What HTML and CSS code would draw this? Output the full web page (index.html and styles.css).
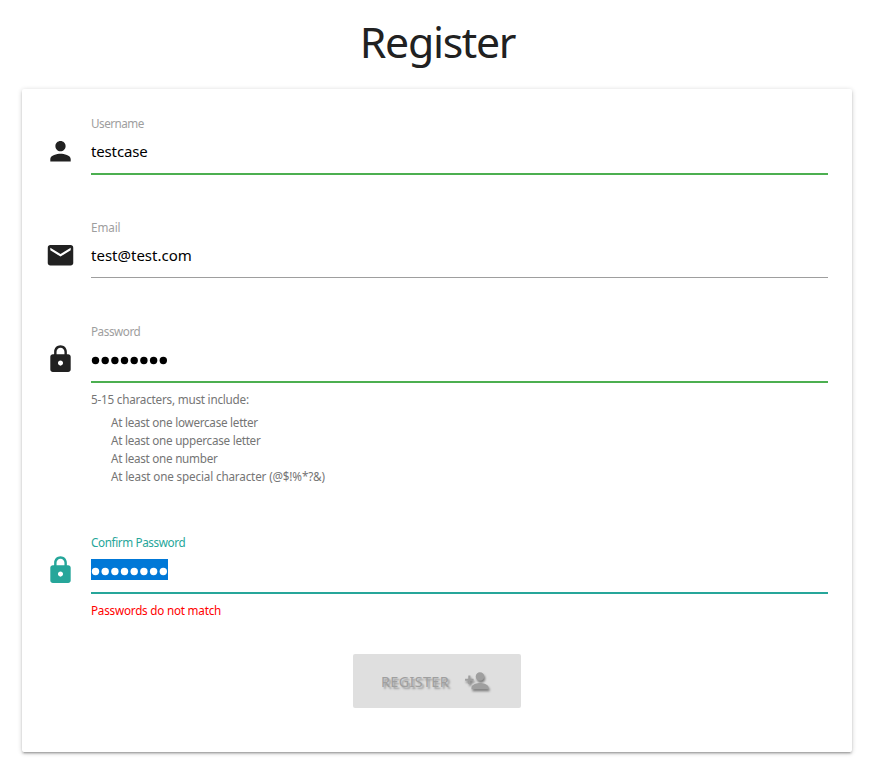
FILE: index.html
```html
<!DOCTYPE html>
<html lang="en">
<head>
<meta charset="utf-8">
<title>Register</title>
<link rel="stylesheet" href="styles.css">
</head>
<body>
<svg width="0" height="0" class="defs">
  <symbol id="person" viewBox="0 0 24 24"><path d="M12 12c2.21 0 4-1.79 4-4s-1.79-4-4-4-4 1.79-4 4 1.79 4 4 4zm0 2c-2.67 0-8 1.34-8 4v2h16v-2c0-2.66-5.33-4-8-4z"/></symbol>
  <symbol id="mail" viewBox="0 0 24 24"><path d="M20 4H4c-1.1 0-1.99.9-1.99 2L2 18c0 1.1.9 2 2 2h16c1.1 0 2-.9 2-2V6c0-1.1-.9-2-2-2zm0 4l-8 5-8-5V6l8 5 8-5v2z"/></symbol>
  <symbol id="lock" viewBox="0 0 24 24"><path d="M18 8h-1V6c0-2.76-2.24-5-5-5S7 3.24 7 6v2H6c-1.1 0-2 .9-2 2v10c0 1.1.9 2 2 2h12c1.1 0 2-.9 2-2V10c0-1.1-.9-2-2-2zm-6 9c-1.100 0-2-.9-2-2s.9-2 2-2 2 .9 2 2-.9 2-2 2zm3.100-9H8.900V6c0-1.710 1.390-3.100 3.100-3.100 1.710 0 3.100 1.390 3.100 3.100v2z"/></symbol>
  <symbol id="dots" viewBox="0 0 77 21"><circle cx="4.500" cy="12.500" r="3.700"/><circle cx="14.200" cy="12.500" r="3.700"/><circle cx="23.900" cy="12.500" r="3.700"/><circle cx="33.500" cy="12.500" r="3.700"/><circle cx="43.200" cy="12.500" r="3.700"/><circle cx="52.900" cy="12.500" r="3.700"/><circle cx="62.600" cy="12.500" r="3.700"/><circle cx="72.300" cy="12.500" r="3.700"/></symbol>
</svg>
<h1>Register</h1>
<main class="card">
  <div class="field">
    <svg class="icon"><use href="#person"/></svg>
    <div class="body">
      <div class="label username">Username</div>
      <div class="value valid"><span class="name">testcase</span></div>
    </div>
  </div>
  <div class="field">
    <svg class="icon"><use href="#mail"/></svg>
    <div class="body">
      <div class="label email">Email</div>
      <div class="value"><span class="address">test@test.com</span></div>
    </div>
  </div>
  <div class="field password">
    <svg class="icon"><use href="#lock"/></svg>
    <div class="body">
      <div class="label pass">Password</div>
      <div class="value valid"><svg class="dots"><use href="#dots"/></svg></div>
      <div class="helper"><span>5-15 characters, must include:</span></div>
      <ul class="rules">
        <li>At least one lowercase letter</li>
        <li>At least one uppercase letter</li>
        <li>At least one number</li>
        <li class="special">At least one special character (@$!%*?&amp;)</li>
      </ul>
    </div>
  </div>
  <div class="field active">
    <svg class="icon"><use href="#lock"/></svg>
    <div class="body">
      <div class="label confirm">Confirm Password</div>
      <div class="value"><svg class="dots selected"><use href="#dots"/></svg></div>
      <div class="helper error"><span>Passwords do not match</span></div>
    </div>
  </div>
  <button class="submit" disabled><span>REGISTER</span>
    <svg viewBox="0 0 24 24"><path d="M15 12c2.210 0 4-1.790 4-4s-1.790-4-4-4-4 1.790-4 4 1.790 4 4 4zm-9-2V7H4v3H1v2h3v3h2v-3h3v-2H6zm9 4c-2.670 0-8 1.340-8 4v2h16v-2c0-2.660-5.330-4-8-4z"/></svg>
  </button>
</main>
</body>
</html>
```
FILE: styles.css
```css
* { box-sizing: border-box; }
body { margin: 0; min-height: 777px; background: #fff; color: #212121; font-family: "Segoe UI", "Noto Sans", sans-serif; }
.defs { position: absolute; }
h1 { margin: 0; height: 89px; padding: 14px 2px 0 0; font-size: 42.8px; line-height: 55px; font-weight: 400; text-align: center; letter-spacing: -1.3px; }
.card { width: 830px; height: 663px; margin-left: 22px; padding: 26px 24px 0 23px; border-radius: 2px; box-shadow: 0 2px 2px 0 rgba(0,0,0,.14), 0 3px 1px -2px rgba(0,0,0,.12), 0 1px 5px 0 rgba(0,0,0,.2); }
.field { display: flex; height: 104px; }
.field.password { height: 211px; }
.icon { width: 31px; height: 30.6px; margin-top: 20.6px; fill: currentColor; flex: none; }
.body { flex: 1; margin-left: 15px; }
.label { height: 18px; font-size: 11.7px; line-height: 16px; color: #9e9e9e; white-space: nowrap; letter-spacing: -.5px; }
.email { letter-spacing: -.1px; }
.pass { letter-spacing: -.45px; }
.confirm { letter-spacing: -.38px; }
.value { height: 41px; margin-bottom: 1px; padding-top: 7px; border-bottom: 1px solid #9e9e9e; color: #000; font-size: 15px; line-height: 22px; }
.value.valid { height: 42px; margin-bottom: 0; border-bottom: 2px solid #4caf50; }
.name { letter-spacing: -.15px; }
.address { letter-spacing: 0; }
.dots { display: block; width: 77px; height: 21px; fill: #000; }
.active { color: #26a69a; }
.active .label { color: #26a69a; }
.active .value { height: 42px; margin-bottom: 0; border-bottom: 2px solid #26a69a; }
.dots.selected { background: #0078d7; fill: #fff; }
.helper { height: 18px; margin-top: 7px; font-size: 11.7px; line-height: 18px; color: #757575; letter-spacing: -.22px; }
.helper.error { color: #f00; }
.rules { list-style: none; margin: 5px 0 0; padding: 0 0 0 20px; font-size: 11.7px; line-height: 18px; color: #757575; letter-spacing: -.27px; }
.special { letter-spacing: -.16px; }
.submit { display: flex; align-items: center; width: 168px; height: 54px; margin: 16px 0 0 308px; padding: 0 0 0 28px; border: 0; border-radius: 2px; background: #dfdfdf; color: #9f9f9f; font: 14.4px "Segoe UI", "Noto Sans", sans-serif; letter-spacing: .35px; text-shadow: 2px 2px 2px rgba(0,0,0,.35); }
.submit span { width: 83px; text-align: left; }
.submit svg { width: 25.6px; height: 25.6px; fill: currentColor; filter: drop-shadow(1px 2px 1px rgba(0,0,0,.45)); }
```
